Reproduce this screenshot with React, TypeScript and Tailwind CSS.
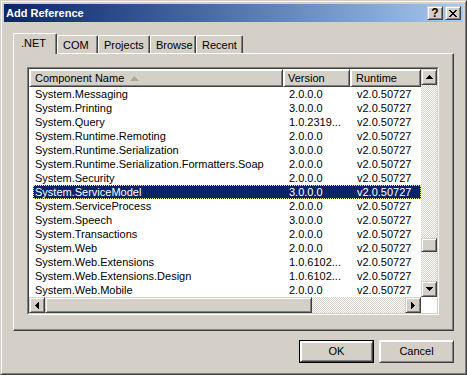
import React from 'react';

const rows = [
  ['System.Messaging', '2.0.0.0'],
  ['System.Printing', '3.0.0.0'],
  ['System.Query', '1.0.2319...'],
  ['System.Runtime.Remoting', '2.0.0.0'],
  ['System.Runtime.Serialization', '3.0.0.0'],
  ['System.Runtime.Serialization.Formatters.Soap', '2.0.0.0'],
  ['System.Security', '2.0.0.0'],
  ['System.ServiceModel', '3.0.0.0'],
  ['System.ServiceProcess', '2.0.0.0'],
  ['System.Speech', '3.0.0.0'],
  ['System.Transactions', '2.0.0.0'],
  ['System.Web', '2.0.0.0'],
  ['System.Web.Extensions', '1.0.6102...'],
  ['System.Web.Extensions.Design', '1.0.6102...'],
  ['System.Web.Mobile', '2.0.0.0'],
];

const raised =
  'border border-t-[#d4d0c8] border-l-[#d4d0c8] border-r-[#404040] border-b-[#404040] shadow-[inset_1px_1px_#ffffff,inset_-1px_-1px_#808080] bg-[#d4d0c8]';

const dither =
  'bg-[image:repeating-conic-gradient(#d4d0c8_0%_25%,#ffffff_0%_50%)] bg-size-[2px_2px]';

function Arrow({ dir }: { dir: 'up' | 'down' | 'left' | 'right' }) {
  const pts = {
    up: '3.5,0 7,4 0,4',
    down: '0,0 7,0 3.5,4',
    left: '4,0 4,7 0,3.5',
    right: '0,0 4,3.5 0,7',
  }[dir];
  const vertical = dir === 'up' || dir === 'down';
  return (
    <svg width={vertical ? 7 : 4} height={vertical ? 4 : 7} viewBox={vertical ? '0 0 7 4' : '0 0 4 7'}>
      <polygon points={pts} fill="#000" shapeRendering="crispEdges" />
    </svg>
  );
}

function ScrollBtn({ dir }: { dir: 'up' | 'down' | 'left' | 'right' }) {
  return (
    <div className={`w-[16px] h-[16px] shrink-0 flex items-center justify-center ${raised}`}>
      <Arrow dir={dir} />
    </div>
  );
}

export default function App() {
  return (
    <div
      className="w-[467px] h-[375px] border border-t-[#d4d0c8] border-l-[#d4d0c8] border-r-[#404040] border-b-[#404040] text-[11px] leading-[13px] text-black"
      style={{ fontFamily: '"Liberation Sans", Arial, sans-serif' }}
    >
      <div className="h-full border border-t-white border-l-white border-r-[#808080] border-b-[#808080] bg-[#d4d0c8] p-[2px] flex flex-col">
        {/* title bar */}
        <div className="h-[18px] shrink-0 flex items-center bg-linear-to-r from-[#0a246a] to-[#a6caf0] pl-[2px] pr-[2px]">
          <span className="font-bold text-white flex-1">Add Reference</span>
          <div className={`w-[16px] h-[14px] flex items-center justify-center font-bold text-[12px] ${raised}`}>?</div>
          <div className={`w-[16px] h-[14px] ml-[2px] flex items-center justify-center ${raised}`}>
            <svg width="8" height="7" viewBox="0 0 8 7">
              <path d="M0 0h2v1h1v1h2V1h1V0h2v1H7v1H6v1H5v1h1v1h1v1h1v1H6V6H5V5H3v1H2v1H0V6h1V5h1V4h1V3H2V2H1V1H0z" fill="#000" />
            </svg>
          </div>
        </div>

        {/* body */}
        <div className="flex flex-col px-[9px] pt-[11px]">
          {/* tabs */}
          <div className="flex items-end h-[20px]">
            <div className="relative z-10 w-[44px] h-[21px] -mb-[1px] bg-[#d4d0c8] border-t border-l border-white border-r border-r-[#404040] shadow-[inset_-1px_0_#808080] rounded-tl-[2px] rounded-tr-[2px] pl-[7px] pt-[3px]">
              .NET
            </div>
            {[
              ['COM', 'w-[41px]'],
              ['Projects', 'w-[52px]'],
              ['Browse', 'w-[46px]'],
              ['Recent', 'w-[47px]'],
            ].map(([t, w]) => (
              <div
                key={t}
                className={`${w} h-[18px] border-t border-l border-white border-r border-r-[#404040] shadow-[inset_-1px_0_#808080] rounded-tl-[2px] rounded-tr-[2px] pl-[5px] pt-[3px]`}
              >
                {t}
              </div>
            ))}
          </div>

          {/* panel */}
          <div className="w-[441px] h-[278px] border border-t-white border-l-white border-r-[#404040] border-b-[#404040] shadow-[inset_-1px_-1px_#808080] pl-[13px] pt-[13px]">
            <div className="w-[412px] h-[248px] border border-t-[#808080] border-l-[#808080] border-r-white border-b-white">
              <div className="h-full border border-t-[#404040] border-l-[#404040] border-r-[#d4d0c8] border-b-[#d4d0c8] bg-white flex">
                {/* main column */}
                <div className="w-[392px] flex flex-col">
                  <div className="h-[18px] flex">
                    <div className={`w-[254px] h-full flex items-center pl-[5px] ${raised} border-t-white border-l-white shadow-[inset_-1px_-1px_#808080]`}>
                      Component Name
                      <svg width="9" height="5" viewBox="0 0 9 5" className="ml-[6px]">
                        <polygon points="4.5,0 9,5 0,5" fill="#aca899" />
                      </svg>
                    </div>
                    <div className={`w-[67px] h-full flex items-center pl-[4px] ${raised} border-t-white border-l-white shadow-[inset_-1px_-1px_#808080]`}>
                      Version
                    </div>
                    <div className={`w-[71px] h-full flex items-center pl-[5px] ${raised} border-t-white border-l-white shadow-[inset_-1px_-1px_#808080]`}>
                      Runtime
                    </div>
                  </div>
                  <div className="flex flex-col">
                    {rows.map(([name, ver]) => {
                      const sel = name === 'System.ServiceModel';
                      return (
                        <div key={name} className="h-[14px] pl-[4px] flex">
                          <div
                            className={`flex-1 flex items-center ${
                              sel ? 'bg-[#0a246a] text-white border border-dotted border-[#f3e58a]' : 'border border-transparent'
                            }`}
                          >
                            <div className="w-[250px] pl-[1px] whitespace-nowrap overflow-hidden">{name}</div>
                            <div className="w-[67px] pl-[5px] whitespace-nowrap">{ver}</div>
                            <div className="pl-[6px] whitespace-nowrap">v2.0.50727</div>
                          </div>
                        </div>
                      );
                    })}
                  </div>
                  <div className="h-[16px] flex">
                    <ScrollBtn dir="left" />
                    <div className={`w-[267px] h-full ${raised}`} />
                    <div className={`flex-1 h-full ${dither}`} />
                    <ScrollBtn dir="right" />
                  </div>
                </div>
                {/* vertical scrollbar */}
                <div className="w-[16px] flex flex-col">
                  <ScrollBtn dir="up" />
                  <div className={`h-[196px] flex flex-col ${dither}`}>
                    <div className="h-[153px]" />
                    <div className={`h-[14px] ${raised}`} />
                  </div>
                  <ScrollBtn dir="down" />
                  <div className="flex-1 bg-white" />
                </div>
              </div>
            </div>
          </div>

          {/* buttons */}
          <div className="flex justify-end gap-[5px] mt-[9px]">
            <div className="w-[75px] h-[23px] border border-black">
              <div className={`h-full flex items-center justify-center ${raised} border-t-white border-l-white`}>OK</div>
            </div>
            <div className={`w-[75px] h-[23px] flex items-center justify-center ${raised} border-t-white border-l-white`}>
              Cancel
            </div>
          </div>
        </div>
      </div>
    </div>
  );
}
